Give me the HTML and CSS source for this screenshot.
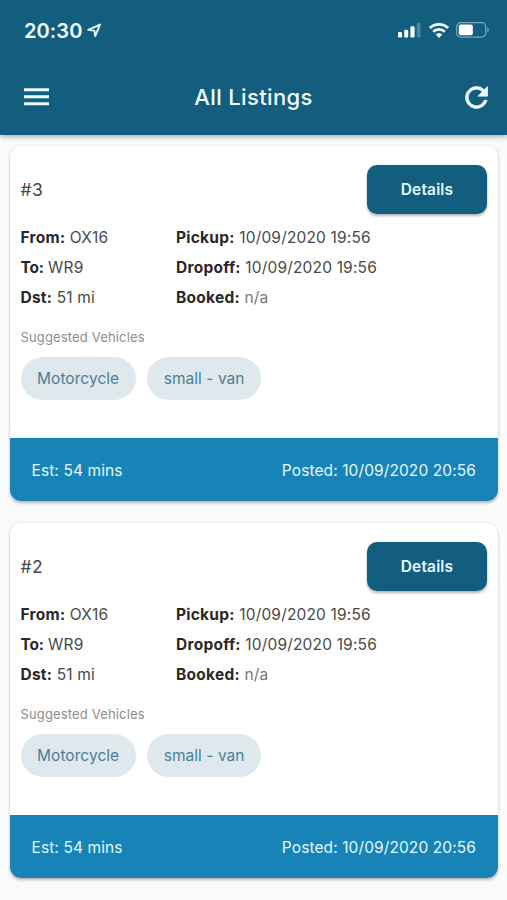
FILE: index.html
```html
<!DOCTYPE html>
<html lang="en">
<head>
<meta charset="utf-8">
<title>All Listings</title>
<link rel="stylesheet" href="styles.css">
</head>
<body>
<header class="header">
  <div class="status">
    <span class="time">20:30</span>
    <svg class="loc" width="15" height="15" viewBox="0 0 15 15"><path d="M1.2 6.8 13 1.6 8.2 13.2 7.4 7.6Z" fill="none" stroke="#e8fbff" stroke-width="1.9" stroke-linejoin="round"/></svg>
    <svg class="signal" width="23" height="15" viewBox="0 0 23 15" fill="#fff"><rect x="0" y="9" width="4" height="5.5" rx="1.2"/><rect x="6.2" y="6.7" width="4" height="7.8" rx="1.2"/><rect x="12.4" y="3.2" width="4.2" height="11.3" rx="1.2"/><rect x="18.8" y="0" width="3.6" height="14.5" rx="1.2" opacity=".25"/></svg>
    <svg class="wifi" width="20" height="15" viewBox="0 0 20 15"><g fill="none" stroke="#effcff" stroke-width="2.7"><path d="M.9 5.1a13 13 0 0 1 18.2 0"/><path d="M4.2 8.8a8.3 8.3 0 0 1 11.6 0"/></g><path d="M6.7 11.5a4.8 4.8 0 0 1 6.6 0L10 15Z" fill="#fff"/></svg>
    <svg class="battery" width="34" height="16" viewBox="0 0 34 16"><rect x=".7" y=".7" width="29" height="14.4" rx="4" fill="none" stroke="#fff" stroke-opacity=".45" stroke-width="1.2"/><rect x="2.8" y="2.6" width="14" height="10.6" rx="2" fill="#fff"/><path d="M31.4 5.2q2.6 2.7 0 5.4Z" fill="#fff" opacity=".5"/></svg>
  </div>
  <div class="bar">
    <svg class="menu" width="25" height="18" viewBox="0 0 25 18" fill="#e8f9ff"><path d="M0 .3h25v3H0zM0 7.3h25v3H0zM0 14.2h25v3H0z"/></svg>
    <h1 class="title">All Listings</h1>
    <svg class="refresh" width="33" height="33" viewBox="0 0 24 24" fill="#f3fcff" stroke="#f3fcff" stroke-width=".5"><path d="M17.65 6.35A7.96 7.96 0 0 0 12 4a8 8 0 1 0 7.73 10h-2.08A6 6 0 1 1 12 6c1.66 0 3.14.69 4.22 1.78L13 11h7V4z"/></svg>
  </div>
</header>
<main class="list">
  <article class="card">
    <div class="body">
      <div class="top"><span class="num">#3</span><button class="details">Details</button></div>
      <div class="facts">
        <div><b>From:</b> <span>OX16</span></div><div><b>Pickup:</b> <span>10/09/2020 19:56</span></div>
        <div><b class="tight">To:</b> <span>WR9</span></div><div><b>Dropoff:</b> <span>10/09/2020 19:56</span></div>
        <div><b>Dst:</b> <span>51 mi</span></div><div><b>Booked:</b> <span class="na">n/a</span></div>
      </div>
      <div class="label">Suggested Vehicles</div>
      <div class="chips"><span class="chip">Motorcycle</span><span class="chip">small - van</span></div>
    </div>
    <footer class="foot"><span>Est: 54 mins</span><span>Posted: 10/09/2020 20:56</span></footer>
  </article>
  <article class="card">
    <div class="body">
      <div class="top"><span class="num">#2</span><button class="details">Details</button></div>
      <div class="facts">
        <div><b>From:</b> <span>OX16</span></div><div><b>Pickup:</b> <span>10/09/2020 19:56</span></div>
        <div><b class="tight">To:</b> <span>WR9</span></div><div><b>Dropoff:</b> <span>10/09/2020 19:56</span></div>
        <div><b>Dst:</b> <span>51 mi</span></div><div><b>Booked:</b> <span class="na">n/a</span></div>
      </div>
      <div class="label">Suggested Vehicles</div>
      <div class="chips"><span class="chip">Motorcycle</span><span class="chip">small - van</span></div>
    </div>
    <footer class="foot"><span>Est: 54 mins</span><span>Posted: 10/09/2020 20:56</span></footer>
  </article>
</main>
</body>
</html>
```
FILE: styles.css
```css
* { box-sizing: border-box; }
body {
  margin: 0;
  height: 900px;
  overflow: hidden;
  background: #fafafa;
  color: #484848;
  font-family: Inter, "Liberation Sans", sans-serif;
  font-size: 15.5px;
}
.header {
  height: 135px;
  background: #135e7e;
  box-shadow: 0 2px 5px rgba(0, 0, 0, .3);
}
.status {
  display: flex;
  align-items: center;
  height: 60px;
  padding: 0 17px 0 24px;
}
.time {
  width: 58px;
  padding-top: 1px;
  color: #f3fdff;
  font-size: 20px;
  font-weight: 600;
  letter-spacing: .1px;
}
.loc { margin-left: 5px; }
.signal { margin-left: auto; }
.wifi { margin-left: 8px; }
.battery { margin-left: 7px; }
.bar {
  display: grid;
  grid-template-columns: 60px 1fr 60px;
  align-items: center;
  height: 74px;
  padding: 0 14px 0 24px;
}
.title {
  margin: 0 10px 0 0;
  color: #eefbff;
  text-align: center;
  font-size: 22px;
  font-weight: 500;
  letter-spacing: .35px;
}
.refresh { justify-self: end; }
.list {
  display: grid;
  gap: 22px;
  padding: 11px 9px 0 9.5px;
}
.card {
  height: 355px;
  display: flex;
  flex-direction: column;
  overflow: hidden;
  border-radius: 11px;
  background: #fff;
  box-shadow: 0 1.5px 3px rgba(0, 0, 0, .28);
}
.body { flex: 1; padding: 19px 11px 0; }
.top {
  display: flex;
  align-items: center;
  justify-content: space-between;
  height: 49px;
}
.num { font-size: 17.5px; letter-spacing: .3px; }
.details {
  width: 120px;
  height: 49px;
  padding: 0;
  border: 0;
  border-radius: 10px;
  background: #135e7e;
  box-shadow: 0 1.5px 3px rgba(0, 0, 0, .3);
  color: #e4f8ff;
  font: 600 15.5px Inter, "Liberation Sans", sans-serif;
  letter-spacing: .15px;
}
.facts {
  display: grid;
  grid-template-columns: 155.5px 1fr;
  margin-top: 9px;
  line-height: 30px;
  letter-spacing: .17px;
  white-space: nowrap;
}
.facts b { color: #282828; font-weight: 700; letter-spacing: .25px; }
.facts .tight { letter-spacing: -.25px; }
.facts .na { color: #777; }
.label {
  margin-top: 15px;
  color: #8d8d8d;
  font-size: 13px;
  line-height: 18px;
  letter-spacing: .15px;
}
.chips { display: flex; gap: 11.5px; margin-top: 11px; }
.chip {
  height: 43px;
  padding: 0 16.5px;
  border-radius: 22px;
  background: #dfe8ec;
  color: #4b7f97;
  line-height: 44px;
  letter-spacing: .05px;
}
.foot {
  display: flex;
  align-items: center;
  justify-content: space-between;
  height: 63px;
  padding: 2px 22px 0;
  background: #1883b7;
  color: #e2f8ff;
  letter-spacing: .1px;
}
```
